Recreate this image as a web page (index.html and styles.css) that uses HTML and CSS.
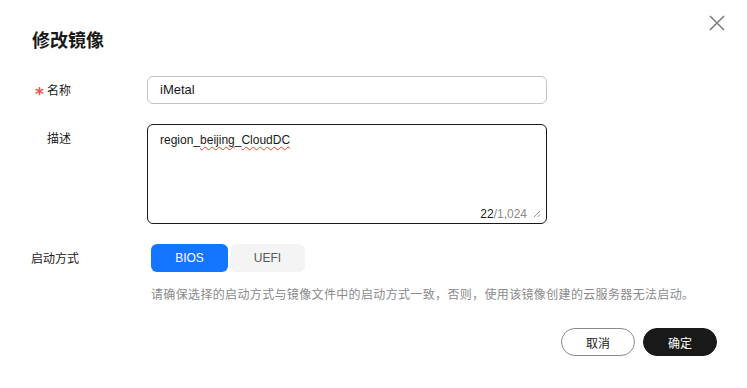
FILE: index.html
```html
<!DOCTYPE html>
<html lang="zh">
<head>
<meta charset="utf-8">
<link rel="stylesheet" href="styles.css">
</head>
<body>
<div class="dialog">
  <button class="close" aria-label="关闭">
    <svg width="16" height="16" viewBox="0 0 16 16"><path d="M1 1 L15 15 M15 1 L1 15" stroke="#7f7f7f" stroke-width="1.6" fill="none"/></svg>
  </button>
  <h1 class="title">修改镜像</h1>
  <div class="form">
    <div class="row">
      <div class="label label-req"><span class="star">*</span>名称</div>
      <div class="field"><div class="input">iMetal</div></div>
    </div>
    <div class="row row-top">
      <div class="label label-indent">描述</div>
      <div class="field">
        <div class="textarea">
          <div class="ta-text">region_<span class="spell">beijing</span>_<span class="spell">CloudDC</span></div>
          <div class="counter"><span class="cur">22</span><span class="max">/1,024</span>
            <svg class="resize" width="8" height="8" viewBox="0 0 8 8"><path d="M7 1 L1 7 M7 4.5 L4.5 7" stroke="#8c8c8c" stroke-width="1" fill="none"/></svg>
          </div>
        </div>
      </div>
    </div>
    <div class="row">
      <div class="label">启动方式</div>
      <div class="field field-seg">
        <div class="seg">
          <span class="seg-item active">BIOS</span>
          <span class="seg-item">UEFI</span>
        </div>
        <p class="hint">请确保选择的启动方式与镜像文件中的启动方式一致，否则，使用该镜像创建的云服务器无法启动。</p>
      </div>
    </div>
  </div>
  <div class="footer">
    <button class="btn btn-cancel">取消</button>
    <button class="btn btn-ok">确定</button>
  </div>
</div>
</body>
</html>
```
FILE: styles.css
```css
* { box-sizing: border-box; }
html, body { margin: 0; padding: 0; background: #fff; }
body {
  font-family: "Liberation Sans", "Noto Sans CJK SC", sans-serif;
  color: #191919;
  font-size: 12px;
}
.dialog {
  position: relative;
  width: 747px;
  height: 388px;
  padding: 27px 30px 0 31px;
}
.close {
  position: absolute;
  top: 15px;
  right: 22px;
  width: 16px;
  height: 16px;
  padding: 0;
  border: 0;
  background: none;
  display: flex;
}
.title {
  margin: 0;
  font-size: 18px;
  line-height: 24px;
  font-weight: 700;
  font-family: "Noto Sans CJK SC", sans-serif;
  color: #191919;
  padding-left: 1px;
}
.form {
  margin-top: 25px;
  display: flex;
  flex-direction: column;
  gap: 20px;
}
.row {
  display: flex;
  align-items: flex-start;
}
.label {
  width: 116px;
  height: 28px;
  flex: none;
  line-height: 28px;
  font-size: 12px;
  font-family: "Noto Sans CJK SC", sans-serif;
  color: #191919;
}
.label-req { padding-left: 4px; }
.label-indent { padding-left: 16px; }
.star {
  color: #f0534f;
  display: inline-block;
  width: 12px;
  font-size: 17px;
  font-weight: 700;
  line-height: 0;
  font-family: "DejaVu Sans", sans-serif;
  position: relative;
  top: 5px;
}
.field { width: 400px; }
.input {
  height: 28px;
  border: 1px solid #c2c2c2;
  border-radius: 6px;
  padding: 0 12px;
  line-height: 26px;
  font-size: 13px;
  color: #191919;
}
.textarea {
  position: relative;
  height: 100px;
  border: 1px solid #191919;
  border-radius: 6px;
  padding: 6px 12px;
}
.ta-text {
  font-size: 12px;
  line-height: 18px;
  color: #191919;
}
.spell {
  text-decoration: underline wavy #e84026;
  text-decoration-thickness: 1.2px;
  text-underline-offset: 2px;
}
.counter {
  position: absolute;
  right: 5px;
  bottom: 2px;
  font-size: 12px;
  line-height: 14px;
  display: flex;
  align-items: center;
  gap: 5px;
}
.cur { color: #191919; }
.max { color: #8a8a8a; margin-left: -5px; }
.resize { margin-left: 1px; }
.field-seg { padding-left: 4px; }
.seg {
  display: flex;
  gap: 2px;
}
.seg-item {
  height: 28px;
  line-height: 28px;
  border-radius: 6px;
  text-align: center;
  font-size: 12px;
  background: #f4f4f4;
  color: #595959;
  width: 75px;
}
.seg-item.active {
  background: #1476ff;
  color: #fff;
  width: 77px;
}
.hint {
  margin: 13px 0 0;
  font-size: 12px;
  line-height: 18px;
  letter-spacing: 0.35px;
  color: #8a8a8a;
  font-family: "Noto Sans CJK SC", sans-serif;
  white-space: nowrap;
}
.footer {
  display: flex;
  justify-content: flex-end;
  gap: 8px;
  margin-top: 25px;
}
.btn {
  width: 74px;
  height: 28px;
  border-radius: 14px;
  font-size: 12px;
  font-family: "Noto Sans CJK SC", sans-serif;
  padding: 0;
  cursor: pointer;
}
.btn-cancel {
  background: #fff;
  border: 1px solid #8a8a8a;
  color: #191919;
}
.btn-ok {
  background: #191919;
  border: 1px solid #191919;
  color: #fff;
}
```
